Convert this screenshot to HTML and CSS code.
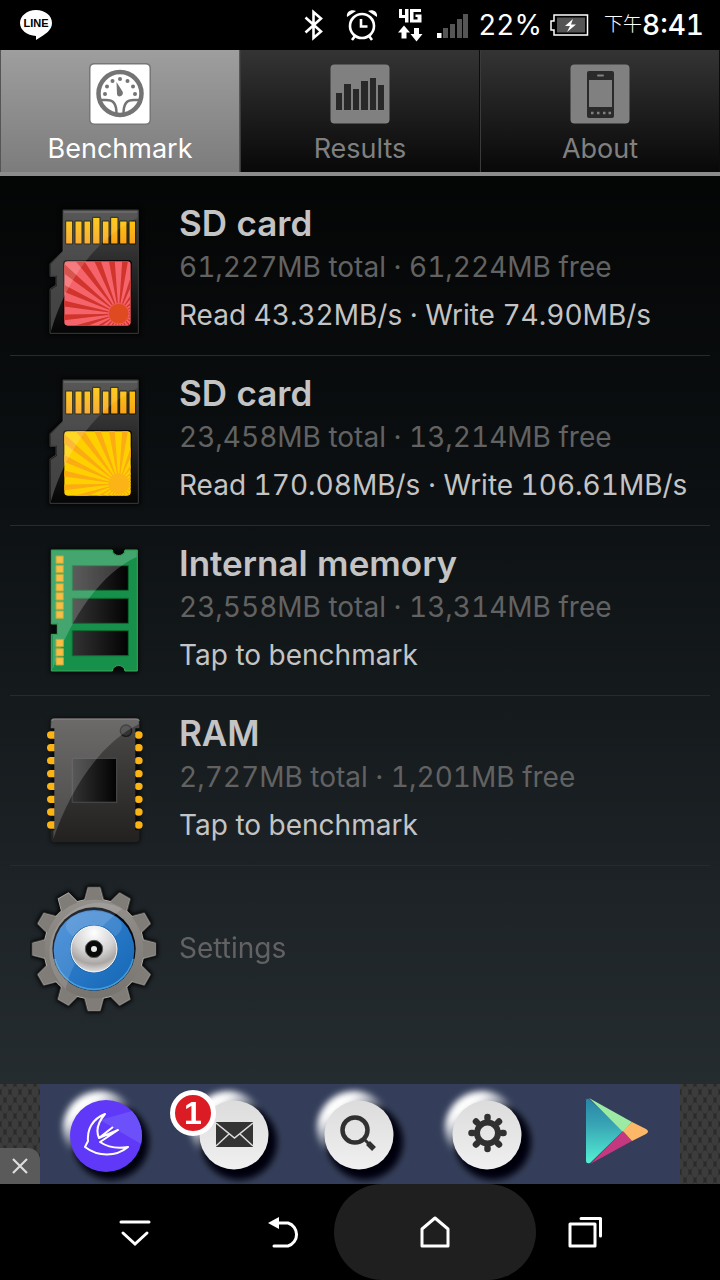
FILE: index.html
```html
<!DOCTYPE html>
<html lang="en">
    <head>
        <meta charset="utf-8">
        <meta name="viewport" content="width=device-width, initial-scale=1.0">
        <title>SD card benchmark</title>
        <link rel="stylesheet" href="styles.css">
    </head>
    <body>
        <!-- gradients and shapes used by more than one icon -->
        <svg class="defs" width="0" height="0" aria-hidden="true">
            <defs>
                <filter id="blur" x="-30%" y="-30%" width="160%" height="160%"><feGaussianBlur stdDeviation="3"/></filter>
                <filter id="blur-wide" x="-30%" y="-30%" width="160%" height="160%"><feGaussianBlur stdDeviation="6"/></filter>
                <linearGradient id="card-body" x1="0" y1="0" x2="0" y2="1">
                    <stop offset="0" stop-color="#4a4a4a"/><stop offset=".5" stop-color="#262626"/><stop offset="1" stop-color="#050505"/>
                </linearGradient>
                <linearGradient id="ram-body" x1="0" y1="0" x2="0" y2="1">
                    <stop offset="0" stop-color="#4c4a49"/><stop offset="1" stop-color="#222120"/>
                </linearGradient>
                <linearGradient id="gold" x1="0" y1="0" x2="0" y2="1">
                    <stop offset="0" stop-color="#fcc80c"/><stop offset="1" stop-color="#f8a01c"/>
                </linearGradient>
                <linearGradient id="shine" x1="0" y1="0" x2="0" y2="1">
                    <stop offset="0" stop-color="#fff" stop-opacity=".1"/><stop offset="1" stop-color="#fff" stop-opacity=".32"/>
                </linearGradient>
                <linearGradient id="chip" x1="0" y1="0" x2="1" y2="0">
                    <stop offset="0" stop-color="#333"/><stop offset="1" stop-color="#020202"/>
                </linearGradient>
                <linearGradient id="glow" x1="0" y1="0" x2=".6" y2=".8">
                    <stop offset=".35" stop-color="#fff"/><stop offset=".75" stop-color="#fff" stop-opacity="0"/>
                </linearGradient>
                <linearGradient id="knob-face" x1="0" y1="0" x2="0" y2="1">
                    <stop offset="0" stop-color="#dcdcdc"/><stop offset="1" stop-color="#f0f0f0"/>
                </linearGradient>
                <clipPath id="label-clip"><rect x="103" y="199" width="199" height="193" rx="10"/></clipPath>
                <g id="card">
                    <path d="M99 45H325V415H60V282L78 270V244H60V206L99 168Z" fill="#000" stroke="#000" stroke-width="12" filter="url(#blur-wide)" opacity=".8"/>
                    <path d="M99 45H325V415H60V282L78 270V244H60V206L99 168Z" fill="url(#card-body)" stroke="#3c3c3c" stroke-width="3"/>
                    <path d="M102 51H322" stroke="#707070" stroke-width="5" opacity=".6"/>
                    <path d="M107 78h21v69h-21zM135 78h21v69h-21zM162 78h20v69h-20zM188 67h22v80h-22zM217 78h20v69h-20zM242 67h22v80h-22zM269 78h22v69h-22zM297 78h20v69h-20z" fill="url(#gold)" stroke="#161400" stroke-width="3"/>
                </g>
                <path id="card-shine" d="M99 47H323V68C200 130 110 250 63 408V284L81 272V242H63V207L99 170Z" fill="url(#shine)" opacity=".75"/>
                <g id="knob">
                    <circle cx="71" cy="58" r="38" fill="#01050a" filter="url(#blur)"/>
                    <circle cx="60" cy="44" r="37" fill="url(#glow)" filter="url(#blur)"/>
                </g>
                <path id="tooth" d="M-28-142L-17-183H17L28-142Z"/>
                <g id="teeth">
                    <use href="#tooth"/><use href="#tooth" transform="rotate(30)"/><use href="#tooth" transform="rotate(60)"/>
                    <use href="#tooth" transform="rotate(90)"/><use href="#tooth" transform="rotate(120)"/><use href="#tooth" transform="rotate(150)"/>
                    <use href="#tooth" transform="rotate(180)"/><use href="#tooth" transform="rotate(210)"/><use href="#tooth" transform="rotate(240)"/>
                    <use href="#tooth" transform="rotate(270)"/><use href="#tooth" transform="rotate(300)"/><use href="#tooth" transform="rotate(330)"/>
                    <circle r="149"/>
                </g>
            </defs>
        </svg>

        <header class="status-bar">
            <svg class="status-app" width="40" height="50" viewBox="16 0 40 50" role="img" aria-label="LINE">
                <path d="M36 10c9 0 16 5.500 16 13 0 7-6 11-16 17v-4c-9-.5-16-6-16-13s7-13 16-13z" fill="#fff"/>
                <text x="36" y="27" class="line-text">LINE</text>
            </svg>
            <svg width="34" height="50" viewBox="304 0 34 50" aria-hidden="true">
                <path d="M309.500 17.500L325 31.500 317.500 38V12L325 18.500 309.500 32.500" fill="none" stroke="#fff" stroke-width="2.600"/>
            </svg>
            <svg width="44" height="50" viewBox="346 0 44 50" aria-hidden="true">
                <circle cx="366" cy="26" r="12" fill="none" stroke="#fff" stroke-width="2.600"/>
                <path d="M365 19v7.500h6.500M359 36l-3 4M373 36l3 4" fill="none" stroke="#fff" stroke-width="2.600"/>
                <path d="M351 17c-1-5 4-8 9-6zM381 17c1-5-4-8-9-6z" fill="#fff"/>
            </svg>
            <svg width="34" height="50" viewBox="398 0 34 50" aria-hidden="true">
                <path d="M403 9h3v6h3V9h3.500v13.500H409V18h-6zM414 9h11v3h-7.500v7.500h4V17h-2v-2.500h6v8H414z" fill="#fff"/>
                <path d="M408 25.500l6 7h-3.500v6h-5v-6H402zM418 28h5v6h3.500l-6 7.500-6-7.500h3.500z" fill="#fff"/>
            </svg>
            <svg width="34" height="50" viewBox="440 0 34 50" aria-hidden="true">
                <path d="M447 28h5v10h-5zM454 24h5v14h-5zM461 19h5v19h-5zM467 14h5v24h-5z" fill="#555"/>
                <path d="M441 33h4.500v5H441z" fill="#fff"/>
            </svg>
            <span class="status-text">22%</span>
            <svg width="46" height="50" viewBox="550 0 46 50" aria-hidden="true">
                <path d="M554 15h33.500v20H554v-5h-3v-9h3z" fill="none" stroke="#fff" stroke-width="1.500"/>
                <path d="M557 17.500h28v15h-28z" fill="#555"/>
                <path d="M573 19l-8 7h5l-3 6 9-7.500h-5z" fill="#fff"/>
            </svg>
            <time class="clock" datetime="20:41"><span class="meridiem">下午</span>8:41</time>
        </header>

        <nav class="tabs" aria-label="Sections">
            <a class="tab tab-active" href="#benchmark" aria-current="page">
                <svg width="62" height="62" viewBox="-1 -1 62 62" aria-hidden="true">
                    <rect x="-1" y="-1" width="62" height="62" rx="5" fill="#777"/>
                    <rect x=".5" y=".5" width="59" height="59" rx="4" fill="#fff"/>
                    <g fill="none" stroke="#747474">
                        <circle cx="30" cy="29.500" r="21.500" stroke-width="4.500"/>
                        <path d="M10 36h6c7 0 10.500 3 10.500 14M50 36h-6c-7 0-10.500 3-10.500 14" stroke-width="2.500"/>
                    </g>
                    <g fill="#747474">
                        <path d="M26.500 18l6 9.500c2 4-4.500 7.500-5.500 2.500z"/>
                        <circle cx="30" cy="15" r="2"/><circle cx="22.500" cy="17" r="2"/><circle cx="37.500" cy="17" r="2"/>
                        <circle cx="17" cy="22.500" r="2"/><circle cx="43" cy="22.500" r="2"/><circle cx="15" cy="30" r="2"/><circle cx="45" cy="30" r="2"/>
                    </g>
                </svg>
                Benchmark
            </a>
            <a class="tab" href="#results">
                <svg width="62" height="62" viewBox="-1 -1 62 62" aria-hidden="true">
                    <rect x=".5" y=".5" width="59" height="59" rx="4" fill="#808080"/>
                    <path d="M6 29h6v17H6zM14 20h7v26h-7zM23 25h6v21h-6zM31 17h7v29h-7zM40 14h6v32h-6zM48 21h6v25h-6z" fill="#282828"/>
                </svg>
                Results
            </a>
            <a class="tab" href="#about">
                <svg width="62" height="62" viewBox="-1 -1 62 62" aria-hidden="true">
                    <rect x=".5" y=".5" width="59" height="59" rx="4" fill="#808080"/>
                    <rect x="17" y="7" width="27" height="47" rx="2" fill="#2a2a2a"/>
                    <path d="M19 16h23v27H19z" fill="#808080"/>
                    <path d="M28 11.500h5" stroke="#808080" stroke-width="2" stroke-linecap="round"/>
                    <path d="M21 49h2.500M27 49h2.500M33 49h2.500M38.500 49h2.500" stroke="#808080" stroke-width="2.500"/>
                </svg>
                About
            </a>
        </nav>

        <main class="devices" id="benchmark">
            <a class="device" href="#sd-external">
                <svg width="140" height="150" viewBox="0 0 420 450" aria-hidden="true">
                    <use href="#card"/>
                    <rect x="99" y="195" width="207" height="201" rx="12" fill="#0c0505"/>
                    <g clip-path="url(#label-clip)">
                        <path d="M100 190h210v210H100z" fill="#f4646a"/>
                        <circle cx="266" cy="356" r="150" fill="none" stroke="#d0342c" stroke-width="300" pathLength="50" stroke-dasharray=".85 1.150"/>
                        <circle cx="266" cy="356" r="31" fill="#e04a20" stroke="#ee5a5c" stroke-width="3"/>
                    </g>
                    <use href="#card-shine"/>
                </svg>
                <span class="info">
                    <strong class="name">SD card</strong>
                    <span class="space">61,227MB total · 61,224MB free</span>
                    <span class="speed">Read 43.32MB/s · Write 74.90MB/s</span>
                </span>
            </a>
            <a class="device" href="#sd-internal">
                <svg width="140" height="150" viewBox="0 0 420 450" aria-hidden="true">
                    <use href="#card"/>
                    <rect x="99" y="195" width="207" height="201" rx="12" fill="#0c0a02"/>
                    <g clip-path="url(#label-clip)">
                        <path d="M100 190h210v210H100z" fill="#ffd000"/>
                        <circle cx="266" cy="356" r="150" fill="none" stroke="#fbac12" stroke-width="300" pathLength="50" stroke-dasharray=".85 1.150"/>
                        <circle cx="266" cy="356" r="31" fill="#fbb316"/>
                    </g>
                    <use href="#card-shine"/>
                </svg>
                <span class="info">
                    <strong class="name">SD card</strong>
                    <span class="space">23,458MB total · 13,214MB free</span>
                    <span class="speed">Read 170.08MB/s · Write 106.61MB/s</span>
                </span>
            </a>
            <a class="device" href="#internal">
                <svg width="140" height="150" viewBox="0 0 420 450" aria-hidden="true">
                    <path d="M64 45H322V410H64Z" fill="#000" stroke="#000" stroke-width="8" filter="url(#blur-wide)" opacity=".7"/>
                    <path d="M64 45H247C249 67 283 67 285 45H322V408H285C282 386 250 386 247 408H64V298H82V267H64Z" fill="#16904a" stroke="#3faa5c" stroke-width="3"/>
                    <path d="M127 92h168v74H127zM127 190h168v75H127zM127 287h168v75H127z" fill="url(#chip)" stroke="#0c6a30" stroke-width="3"/>
                    <path d="M66 47H245C250 68 282 68 287 47H320V66C215 115 125 240 68 404V300H84V265H66Z" fill="#fff" opacity=".2"/>
                    <path d="M78 63h22v22H78zM78 91h22v22H78zM78 118h22v22H78zM78 146h22v22H78zM78 173h22v22H78zM78 201h22v22H78zM78 228h22v22H78zM78 313h22v22H78zM78 341h22v22H78zM78 368h22v22H78z" fill="#fabc44" stroke="#a8b040" stroke-width="3"/>
                </svg>
                <span class="info">
                    <strong class="name">Internal memory</strong>
                    <span class="space">23,558MB total · 13,314MB free</span>
                    <span class="speed">Tap to benchmark</span>
                </span>
            </a>
            <a class="device" href="#ram">
                <svg width="140" height="150" viewBox="0 0 420 450" aria-hidden="true">
                    <rect x="62" y="40" width="268" height="374" rx="12" fill="#000" filter="url(#blur-wide)" opacity=".7"/>
                    <path d="M62 90h14M62 128h14M62 167h14M62 206h14M62 244h14M62 283h14M62 321h14M62 360h14M325 90h2M325 128h2M325 167h2M325 206h2M325 244h2M325 283h2M325 321h2M325 360h2" stroke="#fbb414" stroke-width="22" stroke-linecap="round"/>
                    <path d="M62 70V52q0-12 12-12H316q12 0 12 12V70H316V376H328V400q0 12-12 12H74q-12 0-12-12V376H73V70Z" fill="url(#ram-body)"/>
                    <path d="M64 48q2-6 12-6H316q10 0 12 6" fill="none" stroke="#686664" stroke-width="4"/>
                    <rect x="127" y="160" width="133" height="132" fill="url(#chip)" stroke="#444" stroke-width="4"/>
                    <circle cx="288" cy="77" r="17" fill="#343434" stroke="#1a1a1a" stroke-width="4"/>
                    <path d="M66 42H326V58C220 110 125 240 70 402V376H73V70H62Z" fill="#fff" opacity=".18"/>
                </svg>
                <span class="info">
                    <strong class="name">RAM</strong>
                    <span class="space">2,727MB total · 1,201MB free</span>
                    <span class="speed">Tap to benchmark</span>
                </span>
            </a>
            <a class="device" href="#settings">
                <svg width="140" height="150" viewBox="30 0 420 450" aria-hidden="true">
                    <defs>
                        <linearGradient id="steel" x1="0" y1="0" x2="0" y2="1">
                            <stop offset="0" stop-color="#94908c"/><stop offset="1" stop-color="#77736f"/>
                        </linearGradient>
                        <linearGradient id="blue" x1="0" y1="0" x2="1" y2="1">
                            <stop offset="0" stop-color="#3a86d8"/><stop offset="1" stop-color="#1468b4"/>
                        </linearGradient>
                        <radialGradient id="hub" cx=".5" cy=".15" r=".9">
                            <stop offset="0" stop-color="#fff"/><stop offset=".5" stop-color="#d4d2d2"/><stop offset=".75" stop-color="#aaa6a4"/><stop offset="1" stop-color="#f2f2f2"/>
                        </radialGradient>
                    </defs>
                    <g transform="translate(222 222)">
                        <use href="#teeth" fill="#000" stroke="#000" stroke-width="14" filter="url(#blur-wide)"/>
                        <use href="#teeth" fill="#77736f" stroke="#b0aca8" stroke-width="5"/>
                        <use href="#teeth" fill="#807c78"/>
                        <circle r="148" fill="url(#steel)"/>
                        <circle r="125" fill="#04080e"/>
                        <circle r="121" cy="4" fill="url(#blue)"/>
                        <path d="M-118 30A122 122 0 0 0 118 30" fill="none" stroke="#58b0e8" stroke-width="5" opacity=".7"/>
                        <ellipse cy="-68" rx="84" ry="45" fill="#fff" opacity=".12"/>
                        <path d="M85-121C20-70-62 15-85 121A149 149 0 0 1 85-121Z" fill="#fff" opacity=".13"/>
                        <circle r="72" fill="#1458a0"/>
                        <circle r="69" fill="url(#hub)" stroke="#fff" stroke-width="3"/>
                        <circle r="26" fill="#080808" stroke="#5c5c5c" stroke-width="3"/>
                        <circle r="9" fill="#e8e8e8"/>
                    </g>
                </svg>
                <span class="info"><span class="space">Settings</span></span>
            </a>
        </main>

        <aside class="ad" aria-label="Advertisement">
            <div class="banner">
                <a class="ad-link" href="#app" aria-label="Launcher">
                    <svg width="128" height="100" viewBox="0 0 128 100" aria-hidden="true">
                        <use href="#knob"/>
                        <circle cx="66" cy="52" r="36" fill="#6038f8"/>
                        <path d="M102 52a36 36 0 0 1-1 8L60 36 92 27q10 11 10 25z" fill="#6c50fa"/>
                        <path d="M65 30C52 35 47 46 48 57L45 63C58 73 76 73 88 63Q72 66 60 58L78 46 59 54Q54 43 65 30ZM59 54L73 43" fill="none" stroke="#fff" stroke-width="2" stroke-linejoin="round"/>
                    </svg>
                </a>
                <a class="ad-link" href="#mail" aria-label="Mail">
                    <svg width="128" height="100" viewBox="0 0 128 100" aria-hidden="true">
                        <use href="#knob"/>
                        <circle cx="66" cy="51" r="34.500" fill="url(#knob-face)"/>
                        <path d="M48 38h37v25H48z" fill="#333"/>
                        <path d="M48 39l18.500 15L85 39M48 62l13-12M85 62L72 50" fill="none" stroke="#ddd" stroke-width="1.500"/>
                    </svg>
                    <span class="badge">1</span>
                </a>
                <a class="ad-link" href="#search" aria-label="Search">
                    <svg width="128" height="100" viewBox="0 0 128 100" aria-hidden="true">
                        <use href="#knob" x="-2"/>
                        <circle cx="63" cy="51" r="34.500" fill="url(#knob-face)"/>
                        <circle cx="59" cy="46" r="12.500" fill="none" stroke="#303030" stroke-width="4.500"/>
                        <path d="M68 55l5 5" stroke="#303030" stroke-width="3"/>
                        <path d="M72 59l6 6" stroke="#303030" stroke-width="5.500"/>
                    </svg>
                </a>
                <a class="ad-link" href="#tools" aria-label="Tools">
                    <svg width="128" height="100" viewBox="0 0 128 100" aria-hidden="true">
                        <use href="#knob" x="-2"/>
                        <circle cx="63" cy="51" r="34.500" fill="url(#knob-face)"/>
                        <circle cx="63.500" cy="49" r="10.500" fill="none" stroke="#303030" stroke-width="6"/>
                        <path d="M63.500 34v-1M63.500 64v1M48.500 49h-1M78.500 49h1M53 38.500l-1-1M74 38.500l1-1M53 59.500l-1 1M74 59.500l1 1" stroke="#303030" stroke-width="6.500" stroke-linecap="round"/>
                    </svg>
                </a>
                <a class="ad-link" href="#play" aria-label="Google Play">
                    <svg width="128" height="100" viewBox="0 0 128 100" aria-hidden="true">
                        <defs>
                            <linearGradient id="play" x1="0" y1="0" x2="0" y2="1">
                                <stop offset="0" stop-color="#2884a8"/><stop offset=".4" stop-color="#38a4b4"/><stop offset="1" stop-color="#54f0d4"/>
                            </linearGradient>
                        </defs>
                        <path d="M34 16q0-2 3-1l34 32-33 32q-4 1-4-2z" fill="url(#play)"/>
                        <path d="M37 14l43 24-9 10z" fill="#9ceaa4"/>
                        <path d="M38 80l33-33 9 10z" fill="#c43880"/>
                        <path d="M80 38l14 7q4 2.500 0 5l-14 7-9-10z" fill="#fcb868"/>
                    </svg>
                </a>
            </div>
            <button class="close" type="button" aria-label="Close ad">
                <svg width="18" height="18" viewBox="0 0 18 18" aria-hidden="true"><path d="M2 2l14 14M16 2L2 16" stroke="#ddd" stroke-width="2.200"/></svg>
            </button>
        </aside>

        <nav class="system-nav" aria-label="System">
            <button class="key" type="button" aria-label="Hide">
                <svg width="34" height="34" viewBox="0 0 34 34" aria-hidden="true"><path d="M3 7h28M5 18l12 11 12-11" fill="none" stroke="#fff" stroke-width="3" stroke-linecap="round"/></svg>
            </button>
            <button class="key" type="button" aria-label="Back">
                <svg width="34" height="34" viewBox="0 0 34 34" aria-hidden="true"><path d="M8 8h12a12 12 0 0 1 0 23H6" fill="none" stroke="#fff" stroke-width="3" stroke-linecap="round"/><path d="M0 8L11 2v12z" fill="#fff"/></svg>
            </button>
            <button class="key key-home" type="button" aria-label="Home">
                <svg width="34" height="34" viewBox="0 0 34 34" aria-hidden="true"><path d="M4 31V14L17 3l13 11v17z" fill="none" stroke="#fff" stroke-width="3" stroke-linejoin="round"/></svg>
            </button>
            <button class="key" type="button" aria-label="Recent apps">
                <svg width="34" height="34" viewBox="0 0 34 34" aria-hidden="true"><path d="M2 9h25v22H2zM13 3.500h19.500V21" fill="none" stroke="#fff" stroke-width="3" stroke-linejoin="round" stroke-linecap="round"/></svg>
            </button>
        </nav>
    </body>
</html>
```

FILE: styles.css
```css
* {
    box-sizing: border-box;
}

body {
    margin: 0;
    min-height: 100vh;
    display: flex;
    flex-direction: column;
    background-color: #000;
    color: #c4c4c4;
    font-family: Inter, "Noto Sans CJK TC", sans-serif;
    font-size: 28px;
    font-variant-numeric: tabular-nums;
    line-height: 32px;
}

a {
    color: inherit;
    text-decoration: none;
}

button {
    padding: 0;
    border: none;
    background: none;
    color: inherit;
    font: inherit;
}

svg {
    display: block;
    flex: none;
}

.defs {
    position: absolute;
}

/* status bar */
.status-bar {
    display: flex;
    align-items: center;
    gap: 8px;
    height: 50px;
    padding: 0 16px;
    color: #fff;
}

.status-app {
    margin-right: auto;
}

.line-text {
    font: bold 11px "Liberation Sans", sans-serif;
    text-anchor: middle;
}

.status-text {
    min-width: 60px;
}

.clock {
    display: flex;
    align-items: center;
    justify-content: flex-end;
    min-width: 100px;
    font-weight: 500;
    white-space: nowrap;
}

.meridiem {
    font-size: 19px;
    font-weight: 300;
}

/* tabs */
.tabs {
    display: grid;
    grid-template-columns: repeat(3, 1fr);
    border-bottom: 4px solid #8c8c8c;
}

.tab {
    display: flex;
    flex-direction: column;
    align-items: center;
    gap: 8px;
    height: 122px;
    padding-top: 13px;
    border-left: 1px solid #3a3a3a;
    border-right: 1px solid #0c0c0c;
    background: linear-gradient(#343434, #080808);
    color: #808080;
    font-size: 27px;
}

.tab-active {
    border-color: #555;
    background: linear-gradient(#9e9e9e, #7c7c7c);
    color: #fff;
}

/* device list */
.devices {
    flex: 1;
    padding: 10px 10px 0;
    background: linear-gradient(#040505, #0c1012 35%, #252c30);
}

.device {
    display: flex;
    gap: 9px;
    height: 170px;
    padding: 9px 0 10px 20px;
    border-bottom: 1px solid #2a2a2a;
}

.device:last-child {
    border-bottom: none;
}

.info {
    display: flex;
    flex-direction: column;
    justify-content: center;
    padding-bottom: 6px;
    white-space: nowrap;
}

.name {
    margin-bottom: 8px;
    font-size: 35px;
    font-weight: 600;
    line-height: 40px;
}

.space {
    color: #626262;
}

.speed {
    margin-top: 16px;
}

/* ad banner */
.ad {
    position: relative;
    padding: 0 40px;
    background-color: #2a2a2a;
    background-image: radial-gradient(#3c3c3c 3px, transparent 4px), radial-gradient(#3c3c3c 3px, transparent 4px);
    background-size: 10px 16px;
    background-position: 0 0, 5px 8px;
}

.banner {
    display: grid;
    grid-template-columns: repeat(5, 1fr);
    background-color: #343e5a;
}

.ad-link {
    position: relative;
    justify-self: center;
}

.badge {
    position: absolute;
    top: 6px;
    left: 2px;
    width: 46px;
    height: 46px;
    border: 5px solid #fff;
    border-radius: 50%;
    background-color: #dc1c24;
    color: #fff;
    font: bold 32px/36px "Liberation Sans", sans-serif;
    text-align: center;
}

.close {
    position: absolute;
    left: 0;
    bottom: 0;
    display: grid;
    place-items: center;
    width: 40px;
    height: 36px;
    border-top-right-radius: 12px;
    background-color: #5a5a5a;
}

/* system keys */
.system-nav {
    display: grid;
    grid-template-columns: repeat(4, 1fr);
    height: 96px;
    padding: 0 60px;
}

.key {
    position: relative;
    display: grid;
    place-items: center;
}

.key-home {
    z-index: 0;
}

.key-home::before {
    content: "";
    position: absolute;
    z-index: -1;
    inset: 0 -26px;
    border-radius: 48px;
    background-color: #1f1f1f;
}
```
